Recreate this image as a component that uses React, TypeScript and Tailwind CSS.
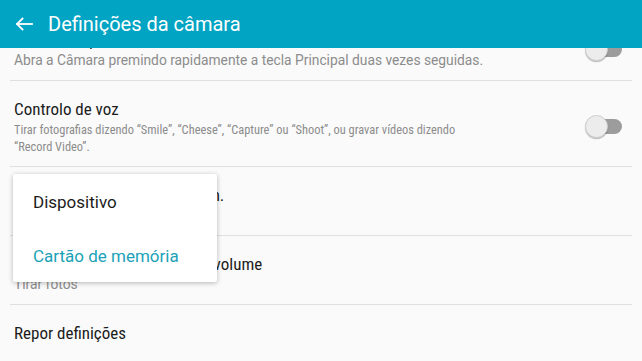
import React from 'react';

type Row = {
  title: string;
  titleClass?: string;
  desc?: string;
  descClass?: string;
  toggle?: boolean;
};

const rows: Row[] = [
  {
    title: 'Abertura rápida',
    desc: 'Abra a Câmara premindo rapidamente a tecla Principal duas vezes seguidas.',
    descClass: 'text-[13.8px]',
    toggle: true,
  },
  {
    title: 'Controlo de voz',
    desc: 'Tirar fotografias dizendo “Smile”, “Cheese”, “Capture” ou “Shoot”, ou gravar vídeos dizendo “Record Video”.',
    descClass: 'text-[12.4px] font-stretch-semi-condensed',
    toggle: true,
  },
  {
    title: 'Localização padrão de armazen.',
    titleClass: 'tracking-[-0.25px]',
    desc: 'Dispositivo',
    descClass: 'text-[13.8px]',
  },
  { title: 'Usar as teclas de controlo do volume', desc: 'Tirar fotos', descClass: 'text-[13.8px]' },
  { title: 'Repor definições' },
];

function Toggle() {
  return (
    <div className="relative w-[37px] h-[23px] shrink-0">
      <div className="absolute right-0 top-[4px] h-[15px] w-[32px] rounded-full bg-[#9c9c9c]" />
      <div className="absolute left-0 top-0 h-[23px] w-[23px] rounded-full bg-[#ececec] border border-[#cfcfcf] shadow-[0_1px_1px_rgba(0,0,0,0.25)]" />
    </div>
  );
}

function BackArrow() {
  return (
    <svg width="18" height="14" viewBox="0 0 18 14" fill="none" stroke="#ffffff" strokeWidth="1.8" strokeLinecap="square">
      <path d="M17 7H2" />
      <path d="M7.5 1.5L2 7l5.5 5.5" />
    </svg>
  );
}

export default function App() {
  return (
    <div
      className="relative w-[642px] h-[361px] overflow-hidden bg-[#fafafa]"
      style={{ fontFamily: 'Roboto, "Noto Sans", sans-serif' }}
    >
      {/* Action bar */}
      <div className="relative z-10 h-[48px] bg-[#02a4c3] flex items-center">
        <div className="pl-[15px] w-[48px] flex items-center">
          <BackArrow />
        </div>
        <span className="text-[20px] text-white leading-none">Definições da câmara</span>
      </div>

      {/* Settings list, scrolled */}
      <div className="-mt-[36px] flex flex-col">
        {rows.map((r, i) => (
          <div
            key={r.title}
            className={
              'mx-[10px] pl-[4px] pr-[10px] pt-[17px] pb-[11px] flex items-center ' +
              (i < rows.length - 1 ? 'border-b border-[#e0e0e0]' : '')
            }
          >
            <div className="w-[480px] flex flex-col">
              <span
                className={
                  'text-[17px] leading-[23px] text-[#1c1c1c] font-stretch-semi-condensed whitespace-nowrap ' +
                  (r.titleClass ?? '')
                }
              >
                {r.title}
              </span>
              {r.desc && (
                <span className={'leading-[17px] text-[#8c8c8c] ' + r.descClass}>{r.desc}</span>
              )}
            </div>
            {r.toggle && (
              <div className="ml-auto">
                <Toggle />
              </div>
            )}
          </div>
        ))}
      </div>

      {/* Storage location popup */}
      <div className="absolute left-[13px] top-[174px] w-[204px] bg-white rounded-[2px] shadow-[0_1px_5px_rgba(0,0,0,0.28)] flex flex-col">
        <div className="h-[54px] flex items-center pl-[20px] pt-[3px] text-[17px] text-[#1c1c1c]">Dispositivo</div>
        <div className="h-[54px] flex items-center pl-[20px] pt-[3px] text-[17px] text-[#1ba2b8]">Cartão de memória</div>
      </div>
    </div>
  );
}
